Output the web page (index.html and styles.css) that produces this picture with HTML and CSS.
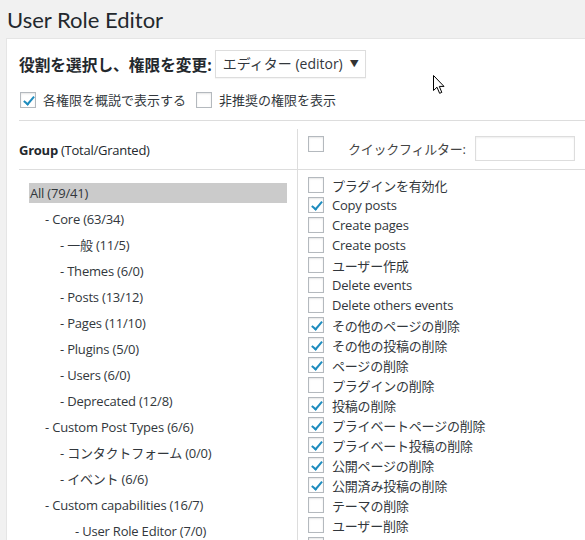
FILE: index.html
```html
<!DOCTYPE html>
<html lang="ja">
<head>
<meta charset="UTF-8">
<title>User Role Editor</title>
<link rel="stylesheet" href="styles.css">
</head>
<body>

<h1 class="title">User Role Editor</h1>

<div class="panel">
    <div class="role-row">
        <span class="role-label">役割を選択し、権限を変更:</span>
        <div class="select">エディター (editor)<span class="arrow">▼</span></div>
    </div>

    <div class="options">
        <label class="opt"><span class="cb on"></span>各権限を概説で表示する</label>
        <label class="opt"><span class="cb"></span>非推奨の権限を表示</label>
    </div>

    <div class="editor">
        <div class="groups-col">
            <div class="col-head"><b>Group</b>&nbsp;(Total/Granted)</div>
            <ul class="groups">
                <li class="current">All (79/41)</li>
                <li class="lv1">- Core (63/34)</li>
                <li class="lv2">- 一般 (11/5)</li>
                <li class="lv2">- Themes (6/0)</li>
                <li class="lv2">- Posts (13/12)</li>
                <li class="lv2">- Pages (11/10)</li>
                <li class="lv2">- Plugins (5/0)</li>
                <li class="lv2">- Users (6/0)</li>
                <li class="lv2">- Deprecated (12/8)</li>
                <li class="lv1">- Custom Post Types (6/6)</li>
                <li class="lv2">- コンタクトフォーム (0/0)</li>
                <li class="lv2">- イベント (6/6)</li>
                <li class="lv1">- Custom capabilities (16/7)</li>
                <li class="lv3">- User Role Editor (7/0)</li>
            </ul>
        </div>

        <div class="caps-col">
            <div class="col-head filter-head">
                <span class="cb"></span>
                <span class="filter-label">クイックフィルター:</span>
                <span class="filter-input"></span>
            </div>
            <ul class="caps">
                <li><span class="cb"></span>プラグインを有効化</li>
                <li><span class="cb on"></span>Copy posts</li>
                <li><span class="cb"></span>Create pages</li>
                <li><span class="cb"></span>Create posts</li>
                <li><span class="cb"></span>ユーザー作成</li>
                <li><span class="cb"></span>Delete events</li>
                <li><span class="cb"></span>Delete others events</li>
                <li><span class="cb on"></span>その他のページの削除</li>
                <li><span class="cb on"></span>その他の投稿の削除</li>
                <li><span class="cb on"></span>ページの削除</li>
                <li><span class="cb"></span>プラグインの削除</li>
                <li><span class="cb on"></span>投稿の削除</li>
                <li><span class="cb on"></span>プライベートページの削除</li>
                <li><span class="cb on"></span>プライベート投稿の削除</li>
                <li><span class="cb on"></span>公開ページの削除</li>
                <li><span class="cb on"></span>公開済み投稿の削除</li>
                <li><span class="cb"></span>テーマの削除</li>
                <li><span class="cb"></span>ユーザー削除</li>
                <li><span class="cb"></span>ユーザー</li>
            </ul>
        </div>
    </div>
</div>

<!-- mouse pointer in the screenshot -->
<svg class="pointer" width="13" height="20" viewBox="0 0 13 20">
    <path d="M0.5 0.5 L0.5 15.5 L4 12.2 L6.6 18.3 L8.8 17.4 L6.3 11.4 L11 11.4 Z" fill="#fff" stroke="#000" stroke-width="1" stroke-linejoin="miter"/>
</svg>

</body>
</html>
```

FILE: styles.css
```css
html, body {
    overflow: hidden;
}

body {
    margin: 0;
    background: #f1f1f1;
    color: #32373c;
    font-family: "Open Sans", "Noto Sans CJK JP", sans-serif;
    font-size: 13px;
    position: relative;
    height: 540px;
}

.title {
    margin: 0;
    padding: 6px 0 0 7px;
    height: 32px;
    font-family: Lato, "Open Sans", sans-serif;
    font-size: 22px;
    font-weight: 400;
    line-height: 28px;
    color: #23282d;
}

.panel {
    margin-left: 6px;
    width: 640px;
    background: #fff;
    border: 1px solid #e5e5e5;
    padding: 11px 0 0 12px;
    box-sizing: border-box;
    height: 520px;
}

.role-row {
    display: flex;
    align-items: center;
    height: 28px;
}

.role-label {
    font-size: 15.7px;
    font-weight: 700;
    color: #23282d;
    margin-right: 3px;
}

.select {
    width: 151px;
    height: 28px;
    box-sizing: border-box;
    border: 1px solid #ddd;
    box-shadow: 0 1px 1px rgba(0,0,0,0.04);
    padding: 0 0 0 7px;
    font-size: 14px;
    line-height: 26px;
    color: #32373c;
    display: flex;
    align-items: center;
}

.arrow {
    margin-left: auto;
    margin-right: 6px;
    font-size: 9px;
    color: #333;
}

.options {
    display: flex;
    align-items: center;
    padding: 12px 0 11px 1px;
    border-bottom: 1px solid #ddd;
}

.opt {
    display: flex;
    align-items: center;
    gap: 7px;
    margin-right: 10px;
    font-size: 13px;
}

.cb {
    display: inline-block;
    width: 16px;
    height: 16px;
    box-sizing: border-box;
    border: 1px solid #b4b9be;
    background: #fff;
    box-shadow: inset 0 1px 2px rgba(0,0,0,0.1);
    position: relative;
    flex: none;
}

.cb.on::after {
    content: "";
    position: absolute;
    left: 5px;
    top: 1px;
    width: 4px;
    height: 9px;
    border: solid #1e8cbe;
    border-width: 0 2.5px 2.5px 0;
    transform: rotate(40deg);
}

.editor {
    display: grid;
    grid-template-columns: 279px 1fr;
    margin-top: 8px;
}

.groups-col {
    border-right: 1px solid #ddd;
    height: 420px;
}

.col-head {
    border-bottom: 1px solid #ddd;
    display: flex;
    align-items: center;
    padding-top: 2px;
    box-sizing: border-box;
    height: 41px;
    color: #23282d;
    letter-spacing: -0.25px;
}

.groups {
    list-style: none;
    margin: 0;
    padding: 13px 10px 0 10px;
    letter-spacing: -0.2px;
}

.groups li {
    line-height: 20px;
    height: 20px;
    margin-bottom: 6px;
    padding-left: 1px;
    white-space: nowrap;
}

.groups .current {
    background: #cbcbcb;
}

.groups .lv1 {
    padding-left: 16px;
}

.groups .lv2 {
    padding-left: 31px;
}

.groups .lv3 {
    padding-left: 46px;
}

.filter-head {
    padding: 0 0 0 10px;
    align-items: flex-start;
}

.filter-head .cb {
    margin-top: 7px;
}

.filter-label {
    margin: 10px 0 0 24px;
    color: #444;
}

.filter-input {
    margin: 7px 0 0 9px;
    width: 100px;
    height: 25px;
    box-sizing: border-box;
    border: 1px solid #ddd;
    box-shadow: inset 0 1px 2px rgba(0,0,0,0.07);
}

.caps {
    list-style: none;
    margin: 0;
    padding: 5px 0 0 10px;
    letter-spacing: -0.2px;
}

.caps li {
    display: flex;
    align-items: center;
    gap: 8px;
    height: 20px;
    white-space: nowrap;
}

.pointer {
    position: absolute;
    left: 433px;
    top: 75px;
}
```
